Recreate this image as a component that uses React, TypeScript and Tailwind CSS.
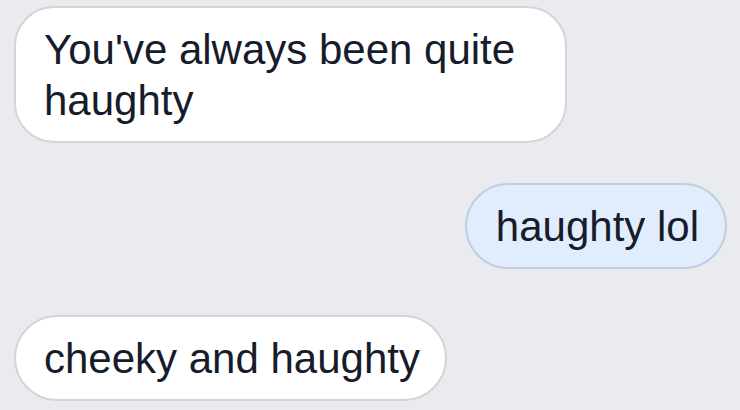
import React from "react";

export default function App() {
  return (
    <div
      className="w-[740px] h-[410px] bg-[#e9ebee] overflow-hidden flex flex-col pl-[14px] pr-[13px] pt-[6px] text-[#161c2b]"
      style={{ fontFamily: '"Liberation Sans", Arial, sans-serif' }}
    >
      <div className="self-start max-w-[553px] bg-white border-2 border-[#d2d4d8] rounded-[40px] px-[28px] py-[15.5px] text-[42px] leading-[51px]">
        You've always been quite haughty
      </div>
      <div className="self-end mt-[40px] bg-[#e1edfd] border-2 border-[#c0cde0] rounded-[43px] pl-[29px] pr-[26px] py-[15.5px] text-[42px] leading-[51px]">
        haughty lol
      </div>
      <div className="self-start mt-[46px] bg-white border-2 border-[#d2d4d8] rounded-[43px] pl-[28px] pr-[25px] py-[15.5px] text-[42px] leading-[51px]">
        cheeky and haughty
      </div>
    </div>
  );
}
